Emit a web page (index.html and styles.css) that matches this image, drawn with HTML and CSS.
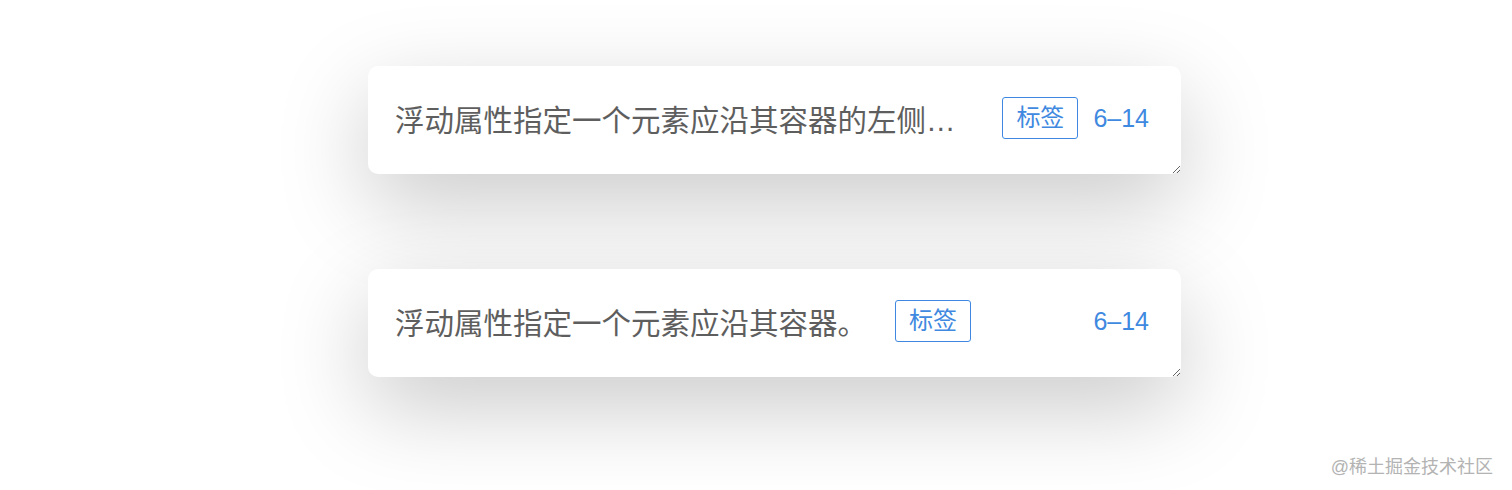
FILE: index.html
```html
<!DOCTYPE html>
<html lang="zh-CN">
<head>
  <meta charset="UTF-8" />
  <title>浮动属性</title>
  <link rel="stylesheet" href="styles.css">
</head>
<body>
  <div class="list">
    <div class="card">
      <span class="text">浮动属性指定一个元素应沿其容器的左侧或右侧放置，允许文本和内联元素环绕它。</span>
      <span class="tag">标签</span>
      <span class="date">6–14</span>
    </div>

    <div class="card">
      <span class="text">浮动属性指定一个元素应沿其容器。</span>
      <span class="tag">标签</span>
      <span class="date">6–14</span>
    </div>
  </div>

  <div class="watermark">@稀土掘金技术社区</div>
</body>
</html>
```

FILE: styles.css
```css
body {
  margin: 0;
  height: 490px;
  overflow: hidden;
  background-color: #ffffff;
  font-family: "Liberation Sans", "Noto Sans CJK SC", sans-serif;
}
.list {
  display: flex;
  flex-direction: column;
  gap: 95px;
  padding: 66px 0 0 368px;
}
.card {
  box-sizing: border-box;
  width: 813px;
  height: 108px;
  display: flex;
  align-items: center;
  padding: 0 32px 4px 27px;
  background: #ffffff;
  border-radius: 10px;
  box-shadow: 0 30px 90px rgba(0, 0, 0, 0.21);
  resize: both;
  overflow: hidden;
}
.text {
  flex: 0 1 auto;
  min-width: 0;
  font-size: 29.5px;
  color: #5e5e5e;
  white-space: nowrap;
  overflow: hidden;
  text-overflow: ellipsis;
}
.tag {
  flex-shrink: 0;
  margin: 0 15px 0 28px;
  height: 42px;
  line-height: 40px;
  box-sizing: border-box;
  padding: 0 13px;
  border: 1px solid #3f88e2;
  border-radius: 3px;
  font-size: 24px;
  color: #3f89e0;
}
.date {
  flex-shrink: 0;
  margin-left: auto;
  font-size: 25px;
  color: #3f89e0;
}
.watermark {
  position: absolute;
  right: 19px;
  bottom: 12px;
  font-size: 18px;
  color: #b3b3b3;
}
```
